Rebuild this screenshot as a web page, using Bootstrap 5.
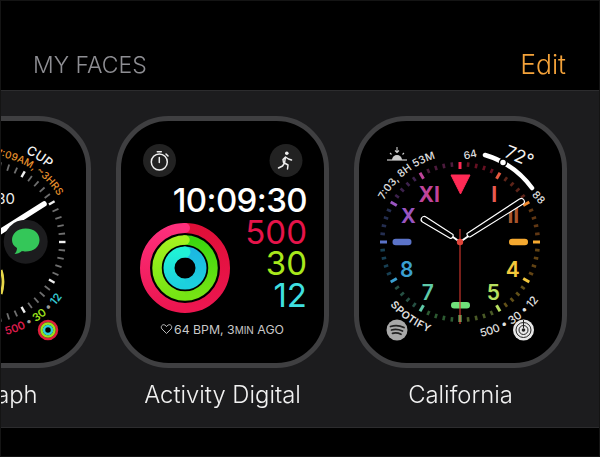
<!DOCTYPE html>
<html>
  <head>
    <title>My Faces</title>
    <link href="https://cdn.jsdelivr.net/npm/bootstrap@5.3.3/dist/css/bootstrap.min.css" rel="stylesheet" />
    <style>
      html, body { height: 100%; background: #000; overflow: hidden; }
      .screen { width: 600px; height: 457px; border: 1px solid #141414; font-family: Inter, "Liberation Sans", sans-serif; }
      .faces-head { height: 89px; padding: 0 33px 0 32px; }
      .faces-title { color: #8e8e93; font-size: 23px; line-height: 1; padding-bottom: 13px; font-weight: 300; will-change: opacity; }
      .faces-edit { color: #f5a33a; font-size: 26.5px; line-height: 1; padding-bottom: 13px; font-weight: 300; will-change: opacity; }
      .faces-panel { height: 338px; background: #1c1c1e; border-top: 1px solid #2c2c2e; border-bottom: 1px solid #2c2c2e; overflow: hidden; }
      .faces-row { margin-left: -123px; padding-top: 25px; gap: 25px; }
      .face-item { width: 213px; flex: none; }
      .face-item svg { display: block; width: 213px; height: 252px; }
      .face-name { color: #f2f2f2; font-size: 23.8px; font-weight: 300; line-height: 28px; margin-top: 13px; white-space: nowrap; will-change: opacity; }
      svg text { font-family: Inter, "Liberation Sans", sans-serif; }
    </style>
  </head>
  <body>
    <div class="screen">
      <div class="faces-head d-flex justify-content-between align-items-end">
        <span class="faces-title">MY FACES</span>
        <span class="faces-edit">Edit</span>
      </div>
      <div class="faces-panel">
        <div class="faces-row d-flex">
          <div class="face-item text-center">
            <svg viewBox="0 0 213 252">
              <rect x="2.5" y="2.5" width="208" height="247" rx="50" fill="#000" stroke="#3f3f41" stroke-width="5" />
              <g class="tick-ring" data-kind="white"></g>
              <path id="p1" d="M118 40 A87 87 0 0 1 190 102" fill="none" />
              <path id="p2" d="M147.400 37.200 A98 98 0 0 1 186 70" fill="none" />
              <path id="p3" d="M128 219 A96 96 0 0 0 186 178" fill="none" />
              <text font-size="10" fill="#e8912d" font-weight="500"><textPath href="#p1">7:09AM, ~3HRS</textPath></text>
              <text font-size="13" fill="#f2f2f2" font-weight="500"><textPath href="#p2">CUP</textPath></text>
              <text font-size="11" font-weight="600"><textPath href="#p3"><tspan fill="#d81b4a">500</tspan><tspan fill="#999"> • </tspan><tspan fill="#9be01c">30</tspan><tspan fill="#999"> • </tspan><tspan fill="#35c6d0">12</tspan></textPath></text>
              <text x="137" y="88" font-size="15" fill="#eee" text-anchor="end">30</text>
              <line x1="106" y1="126" x2="166" y2="88" stroke="#fff" stroke-width="5.500" stroke-linecap="round" />
              <circle cx="147.700" cy="125.700" r="22" fill="#1c1c1e" />
              <path d="M147.700 112.500 C157 112.500 161.500 118 161.500 124 C161.500 131 155.500 135.500 147.700 135.500 C146 135.500 145 135.300 144 135 C142 137 139 138 136.500 138 C138 136.500 139 134.500 139 132 C135.500 130 134 127 134 124 C134 118 139 112.500 147.700 112.500 Z" fill="#34c759" />
              <path d="M123 154 C126 162 125 172 123 178" fill="none" stroke="#e8d84a" stroke-width="3" />
              <circle cx="170" cy="214" r="9" fill="none" stroke="#e0203c" stroke-width="2.500" />
              <circle cx="170" cy="214" r="6.500" fill="none" stroke="#9be01c" stroke-width="2.500" />
              <circle cx="170" cy="214" r="4" fill="none" stroke="#2fd0d8" stroke-width="2.500" />
            </svg>
            <div class="face-name">Infograph</div>
          </div>

          <div class="face-item text-center">
            <svg viewBox="0 0 213 252">
              <defs>
                <linearGradient id="redR" x1="0" y1="0" x2="0" y2="1"><stop offset="0" stop-color="#e00f38" /><stop offset="1" stop-color="#ec1650" /></linearGradient>
                <linearGradient id="redL" x1="0" y1="1" x2="0" y2="0"><stop offset="0" stop-color="#ec1650" /><stop offset="1" stop-color="#fd2f7c" /></linearGradient>
                <linearGradient id="greenR" x1="0" y1="0" x2="0" y2="1"><stop offset="0" stop-color="#3cd60e" /><stop offset="1" stop-color="#76e414" /></linearGradient>
                <linearGradient id="greenL" x1="0" y1="1" x2="0" y2="0"><stop offset="0" stop-color="#76e414" /><stop offset="1" stop-color="#a4f21e" /></linearGradient>
                <linearGradient id="blueR" x1="0" y1="0" x2="0" y2="1"><stop offset="0" stop-color="#1cb8e2" /><stop offset="1" stop-color="#1cd0de" /></linearGradient>
                <linearGradient id="blueL" x1="0" y1="1" x2="0" y2="0"><stop offset="0" stop-color="#1cd0de" /><stop offset="1" stop-color="#20f2d6" /></linearGradient>
              </defs>
              <rect x="2.5" y="2.5" width="208" height="247" rx="50" fill="#000" stroke="#3f3f41" stroke-width="5" />
              <circle cx="43.500" cy="44.500" r="16.500" fill="#222" />
              <circle cx="43.300" cy="46" r="8" fill="none" stroke="#eee" stroke-width="1.500" />
              <path d="M43.300 41.500 V46.500 M41.300 35.800 H45.300 M50 38 L52 40" fill="none" stroke="#eee" stroke-width="1.500" stroke-linecap="round" />
              <circle cx="170" cy="44.500" r="16.500" fill="#222" />
              <circle cx="170.800" cy="37.300" r="1.800" fill="#eee" />
              <path d="M169.500 41 L167 43.500 L167.500 46.500 M169.500 41 L172.500 43 L175.500 44 M169.500 41 L168.500 47 L172 49 L171.500 53 M168.500 47 L166.500 50 L162.500 52" fill="none" stroke="#eee" stroke-width="1.500" stroke-linecap="round" stroke-linejoin="round" />
              <text x="191" y="96" font-size="33" fill="#fff" text-anchor="end" font-weight="500" letter-spacing="-.6">10:09:30</text>
              <text x="191" y="127.500" font-size="33" fill="#e6144a" text-anchor="end">500</text>
              <text x="191" y="159" font-size="33" fill="#a8e81c" text-anchor="end">30</text>
              <text x="191" y="191" font-size="33" fill="#3fdfe0" text-anchor="end">12</text>
              <path d="M69 112 A40 40 0 0 1 69 192" fill="none" stroke="url(#redR)" stroke-width="10" />
              <path d="M69 192 A40 40 0 0 1 69 112" fill="none" stroke="url(#redL)" stroke-width="10" />
              <circle cx="69" cy="112" r="5" fill="#fd2f7c" />
              <path d="M69 124 A28 28 0 0 1 69 180" fill="none" stroke="url(#greenR)" stroke-width="9.500" />
              <path d="M69 180 A28 28 0 0 1 69 124" fill="none" stroke="url(#greenL)" stroke-width="9.500" />
              <circle cx="69" cy="124" r="4.750" fill="#a4f21e" />
              <path d="M69 136 A16 16 0 0 1 69 168" fill="none" stroke="url(#blueR)" stroke-width="11" />
              <path d="M69 168 A16 16 0 0 1 69 136" fill="none" stroke="url(#blueL)" stroke-width="11" />
              <circle cx="69" cy="136" r="5.500" fill="#20f2d6" />
              <path d="M50.500 217.500 L46 213 C44 210.500 46.500 207.800 48.800 209 C49.700 209.400 50.200 210 50.500 210.700 C50.800 210 51.300 209.400 52.200 209 C54.500 207.800 57 210.500 55 213 Z" fill="none" stroke="#bbb" stroke-width="1" />
              <text x="58" y="218" font-size="12.300" fill="#c8c8c8">64 BPM, 3<tspan font-size="10">MIN</tspan> AGO</text>
            </svg>
            <div class="face-name">Activity Digital</div>
          </div>

          <div class="face-item text-center">
            <svg viewBox="0 0 213 252">
              <rect x="2.5" y="2.5" width="208" height="247" rx="50" fill="#000" stroke="#3f3f41" stroke-width="5" />
              <g class="tick-ring" data-kind="rainbow"></g>
              <path d="M131 39 A90 90 0 0 1 178 72" fill="none" stroke="#fff" stroke-width="4.500" stroke-linecap="round" />
              <circle cx="149" cy="46.500" r="3.500" fill="#fff" stroke="#000" stroke-width="1.500" />
              <text transform="translate(117 42) rotate(-12)" font-size="10.500" fill="#ddd" font-weight="500" text-anchor="middle">64</text>
              <text transform="translate(182 84) rotate(48)" font-size="10.500" fill="#ddd" font-weight="500" text-anchor="middle">88</text>
              <text transform="translate(163 46) rotate(22)" font-size="18" fill="#f2f2f2" text-anchor="middle">72°</text>
              <path id="p4" d="M30 84 A87 87 0 0 1 92 40" fill="none" />
              <path id="p5" d="M36 189 A96 96 0 0 0 92 221" fill="none" />
              <path id="p6" d="M127 221 A97 97 0 0 0 191 174" fill="none" />
              <text font-size="10.500" fill="#e0e0e0" font-weight="500"><textPath href="#p4">7:03, 8H 53M</textPath></text>
              <text font-size="10.500" fill="#e0e0e0" font-weight="600" letter-spacing=".5"><textPath href="#p5">SPOTIFY</textPath></text>
              <text font-size="11" fill="#e0e0e0" font-weight="500"><textPath href="#p6">500 • 30 • 12</textPath></text>
              <path d="M33 44 H53" stroke="#ccc" stroke-width="1.200" />
              <path d="M38 44 A5 5 0 0 1 48 44 Z" fill="#ccc" />
              <path d="M43 31 V36 M41 34.500 L43 36.500 L45 34.500 M36 37 L37.500 38.500 M50 37 L48.500 38.500" fill="none" stroke="#ccc" stroke-width="1.100" />
              <path d="M97 59 H116 L106.500 78 Z" fill="#ff2a55" stroke="#ff2a55" stroke-linejoin="round" />
              <g font-weight="600" text-anchor="middle" font-size="21">
                <text x="75.300" y="85.700" fill="#c0449a" font-weight="700">XI</text>
                <text x="140.300" y="85.700" fill="#e85a50" font-weight="700">I</text>
                <text x="159.300" y="106.700" fill="#a8552c" font-weight="700">II</text>
                <text x="54.300" y="106.700" fill="#9a55c0" font-weight="700" font-size="20">X</text>
                <text x="158.700" y="161" fill="#f4c93c">4</text>
                <text x="139.300" y="184" fill="#b8e060">5</text>
                <text x="73.700" y="184" fill="#5fc9a8">7</text>
                <text x="52.700" y="161" fill="#3a9fd0">8</text>
              </g>
              <rect x="38.500" y="122.700" width="19" height="6.500" rx="3.250" fill="#5b73c8" />
              <rect x="155" y="122.700" width="19" height="6.500" rx="3.250" fill="#f5a930" />
              <rect x="97" y="186" width="19" height="6.500" rx="3.250" fill="#6fe07a" />
              <line x1="106" y1="113" x2="106" y2="208" stroke="#c8352c" stroke-width="1.200" />
              <g fill="#000" stroke="#fff" stroke-width="1.200" stroke-linejoin="round">
                <path d="M106 126 L97.500 120" fill="none" stroke-width="2" />
                <path d="M106 126 L116 119" fill="none" stroke-width="2" />
                <path d="M99 118.500 L72 101 A3 3 0 0 0 68.500 106 L96.500 122.500 A3 3 0 0 0 99 118.500 Z" />
                <path d="M116 121 L169 88 A3 3 0 0 0 165.500 83 L113 117.500 A3 3 0 0 0 116 121 Z" />
              </g>
              <circle cx="106" cy="126" r="3.200" fill="#e0453a" />
              <circle cx="43" cy="214" r="10.500" fill="#a8a8a8" />
              <path d="M36.500 210.500 C41 209 46 209.500 50 211.500 M37.500 214 C41 213 45 213.500 48.500 215 M38.500 217.300 C41.500 216.500 44.500 217 47 218.200" fill="none" stroke="#222" stroke-width="1.800" stroke-linecap="round" />
              <circle cx="169.500" cy="214" r="10.500" fill="#e8e8e8" />
              <circle cx="169.500" cy="214" r="7.500" fill="none" stroke="#222" stroke-width="1" />
              <circle cx="169.500" cy="214" r="4.500" fill="none" stroke="#222" stroke-width="1" />
              <circle cx="169.500" cy="214" r="1.800" fill="#222" />
              <line x1="169.500" y1="204" x2="169.500" y2="212" stroke="#222" stroke-width="1" />
            </svg>
            <div class="face-name">California</div>
          </div>
        </div>
      </div>
    </div>

    <script src="https://cdn.jsdelivr.net/npm/bootstrap@5.3.3/dist/js/bootstrap.bundle.min.js"></script>
    <script>
      // 60 ticks round each dial, drawn here so nobody has to type 120 lines
      const hourColors = ["#ff2a55", "#e85a40", "#f08a30", "#f5a930", "#f4c93c", "#b8e060", "#6fe07a", "#5fc9a8", "#3a9fd0", "#5b73c8", "#9a55c0", "#c0449a"];
      const svgNs = "http://www.w3.org/2000/svg";

      document.querySelectorAll(".tick-ring").forEach(function (ring) {
        const rainbow = ring.dataset.kind === "rainbow";
        for (let i = 0; i < 60; i++) {
          const isHour = i % 5 === 0;
          const angle = (i * Math.PI) / 30;
          const inner = rainbow ? (isHour ? 73 : 75.5) : 75;
          const outer = rainbow ? 80 : 81.5;
          const line = document.createElementNS(svgNs, "line");
          line.setAttribute("x1", 106 + inner * Math.sin(angle));
          line.setAttribute("y1", 126 - inner * Math.cos(angle));
          line.setAttribute("x2", 106 + outer * Math.sin(angle));
          line.setAttribute("y2", 126 - outer * Math.cos(angle));
          if (rainbow) {
            line.setAttribute("stroke", hourColors[Math.floor(i / 5)]);
            line.setAttribute("stroke-width", isHour ? 3 : 2.6);
            line.setAttribute("opacity", isHour ? 1 : 0.4);
          } else {
            line.setAttribute("stroke", isHour ? "#eee" : "#6f6f6f");
            line.setAttribute("stroke-width", isHour ? 2.4 : 1.8);
          }
          ring.append(line);
        }
      });
    </script>
  </body>
</html>
